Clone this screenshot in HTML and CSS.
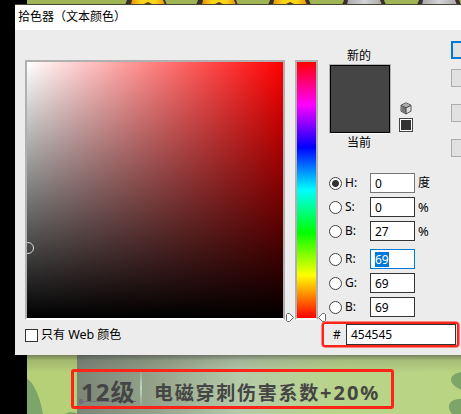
FILE: index.html
```html
<!DOCTYPE html>
<html lang="zh-CN">
<head>
<meta charset="utf-8">
<title>拾色器</title>
<link rel="stylesheet" href="styles.css">
</head>
<body>
<svg class="scene" width="461" height="414" viewBox="0 0 461 414">
  <defs>
    <linearGradient id="panel"><stop offset="0" stop-color="#7c8677"/><stop offset=".2" stop-color="#94a28a"/><stop offset=".42" stop-color="#b5caa8"/><stop offset=".68" stop-color="#b9d48a"/><stop offset="1" stop-color="#b9d582"/></linearGradient>
    <linearGradient id="shade" x2="0" y2="1"><stop offset="0" stop-color="#333" stop-opacity=".5"/><stop offset=".3" stop-color="#333" stop-opacity=".15"/><stop offset="1" stop-color="#333" stop-opacity="0"/></linearGradient>
    <linearGradient id="rule" x2="0" y2="1"><stop offset="0" stop-color="#bdd0b5" stop-opacity="0"/><stop offset=".5" stop-color="#bdd8c4"/><stop offset="1" stop-color="#bdd0b5" stop-opacity="0"/></linearGradient>
    <linearGradient id="gold"><stop offset="0" stop-color="#e8940c"/><stop offset=".3" stop-color="#f9d51a"/><stop offset=".7" stop-color="#f9d51a"/><stop offset="1" stop-color="#e8940c"/></linearGradient>
    <linearGradient id="silver"><stop offset="0" stop-color="#a9a9ab"/><stop offset=".5" stop-color="#d3d3d8"/><stop offset="1" stop-color="#a9a9ab"/></linearGradient>
  </defs>
  <path fill="#000" d="M0 0h461v414H0z"/>
  <path fill="#9fb455" d="M27 0h434v4H27z"/>
  <path fill="#3b3027" d="M127 0h38l2 5h-42zM198 0h38l2 5h-42zM270 0h39l2 5h-43zM344 0h40l2 5h-44zM419 0h40l2 5h-44z"/>
  <path fill="url(#gold)" d="M132 0h31l2 5h-34z"/>
  <path fill="url(#gold)" d="M203 0h31l2 5h-34z"/>
  <path fill="url(#gold)" d="M274 0h31l2 5h-34z"/>
  <path fill="url(#silver)" d="M348 0h32l2 5h-35z"/>
  <path fill="url(#silver)" d="M423 0h32l2 5h-35z"/>
  <path fill="#5b3c10" d="M144 4l4-2 4 2zM215 4l4-2 4 2zM286 4l4-2 4 2z"/>
  <path fill="#474532" d="M15 4h446v1H15z"/>
  <path fill="#b6d078" d="M27 355h50v59H27z"/>
  <path fill="url(#panel)" d="M77 355h384v59H77z"/>
  <path fill="#7da569" d="M27 379c8 4 14 22 16 35H27zM64 414l6-2 7 1v1zM461 372c-11 2-13 9-5 15l5 3zM461 399c-12 0-15 7-9 15h9z"/>
  <path fill="url(#shade)" d="M27 355h434v18H27z"/>
  <path fill="url(#rule)" d="M140 368h2v40h-2z"/>
  <path fill="#756d7c" d="M79 399h4v5h-4zM83 401h53v1H83z"/>
</svg>
<main class="dialog">
  <header class="title">拾色器（文本颜色）</header>
  <div class="body">
    <section class="picker">
      <div class="graphs">
        <div class="field"><i class="marker"></i></div>
        <div class="hue">
          <svg class="sliders" width="40" height="10" viewBox="0 0 40 10"><g fill="#fff" stroke="#666"><path d="M1.500.5h2l4 4-4 4h-2l-1-1v-6zM38.500.5h-2l-4 4 4 4h2l1-1v-6z"/></g></svg>
        </div>
      </div>
      <label class="web"><i class="check"></i><span>只有 <span class="latin">Web</span> 颜色</span></label>
    </section>
    <section class="values">
      <div class="caption">新的</div>
      <div class="compare">
        <div class="swatch"></div>
        <div class="tools">
          <svg width="12" height="13" viewBox="0 0 12 13"><path fill="#ddd" stroke="#555" d="M6 .8l5 2.400v6L6 12 1 9.200v-6z"/><path fill="#777" d="M1.500 4L6 6v5.500L1.500 9z"/><path fill="#aaa" d="M6 1.500l4.300 2L6 5.500l-4.300-2z"/><path fill="none" stroke="#444" d="M1 3.500l5 2.300 5-2.300M6 6v6"/></svg>
          <i class="safe"></i>
        </div>
      </div>
      <div class="caption current">当前</div>
      <div class="rows">
        <label class="row"><i class="radio on"></i><span class="name">H:</span><span class="input soft">0</span><span class="unit">度</span></label>
        <label class="row"><i class="radio"></i><span class="name">S:</span><span class="input">0</span><span class="unit percent">%</span></label>
        <label class="row"><i class="radio"></i><span class="name">B:</span><span class="input">27</span><span class="unit percent">%</span></label>
        <label class="row rgb"><i class="radio"></i><span class="name">R:</span><span class="input focus"><mark>69</mark></span></label>
        <label class="row"><i class="radio"></i><span class="name">G:</span><span class="input">69</span></label>
        <label class="row"><i class="radio"></i><span class="name">B:</span><span class="input">69</span></label>
      </div>
      <div class="hex"><span class="hash">#</span><span class="code">454545</span></div>
    </section>
    <aside class="buttons"><i class="btn primary"></i><i class="btn"></i><i class="btn far"></i><i class="btn far"></i></aside>
  </div>
</main>
<footer class="effect"><span class="level">12级</span><span class="text">电磁穿刺伤害系数<span class="amount">+20%</span></span></footer>
</body>
</html>
```

FILE: styles.css
```css
* { box-sizing: border-box; }
body {
  margin: 0;
  width: 461px;
  height: 414px;
  overflow: hidden;
  position: relative;
  background: #000;
  color: #000;
  font: 12px/16px "Noto Sans", "Noto Sans CJK SC", sans-serif;
  white-space: nowrap;
  display: flow-root;
}
i { display: block; flex: none; }
svg { display: block; }
.scene { position: absolute; inset: 0; z-index: -1; }
.dialog {
  margin: 5px 0 0 15px;
  height: 350px;
  background: #ececec;
  overflow: hidden;
}
.title { height: 25px; padding-left: 3px; background: #fff; line-height: 24px; }
.body { display: flex; height: 325px; }
.picker { width: 314px; padding: 30px 0 0 10px; flex: none; }
.graphs { display: flex; gap: 10px; }
.field, .hue {
  height: 260px;
  border: 2px solid #b0b0b0;
  border-bottom-color: #fff;
}
.field {
  width: 260px;
  position: relative;
  overflow: hidden;
  background: linear-gradient(to bottom, transparent, #000), linear-gradient(to right, #fff, #f00);
}
.marker {
  position: absolute;
  left: -5px;
  top: 180px;
  width: 12px;
  height: 12px;
  border: 1px solid #ddd;
  border-radius: 50%;
}
.hue {
  width: 23px;
  position: relative;
  background: linear-gradient(#f00, #f0f 16.67%, #00f 33.33%, #0ff 50%, #0f0 66.67%, #ff0 83.33%, #f00) padding-box;
}
.sliders { position: absolute; left: -11px; top: 251px; }
.web { display: flex; margin-top: 7px; gap: 3px; align-items: center; }
.latin { font-size: 12.500px; }
.check { width: 13px; height: 13px; background: #fff; border: 1px solid #333; }
.values { width: 122px; flex: none; padding-top: 18px; }
.caption { width: 60px; text-align: center; height: 16px; line-height: 16px; }
.compare { display: flex; align-items: flex-end; gap: 8px; }
.swatch { width: 62px; height: 70px; background: #454545; border: 1px solid #b5b5b5; border-bottom-color: #fff; outline: 1px solid #000; outline-offset: -2px; }
.tools { display: flex; flex-direction: column; align-items: center; gap: 3px; padding-bottom: 2px; }
.safe { width: 14px; height: 14px; background: #333; border: 1px solid #444; box-shadow: inset 0 0 0 1px #fff; }
.current { height: 17px; padding-top: 1px; }
.rows { margin-top: 22px; display: grid; gap: 4px; }
.row { display: flex; align-items: center; height: 20px; }
.rgb { margin-top: 4px; }
.radio { width: 13px; height: 13px; border: 1px solid #444; border-radius: 50%; background: #fff; }
.on { background: radial-gradient(circle, #333 0 3px, #fff 4px); }
.name { width: 28px; padding-left: 3px; }
.input { width: 45px; height: 20px; border: 1px solid #333; background: #fff; padding-left: 4px; line-height: 19px; }
.soft { border-color: #777; }
.focus { border-color: #0078d7; }
mark { display: inline-block; height: 15px; line-height: 15px; background: #0078d7; color: #fff; }
.unit { padding-left: 3px; }
.percent { font-size: 13px; }
.hex {
  display: flex;
  align-items: center;
  width: 137px;
  height: 25px;
  margin: 5px 0 0 -7px;
  border: 2px solid #fe2419;
  border-radius: 3px;
  box-shadow: 0 0 0 .5px #fe2419;
}
.hash { width: 22px; padding-left: 9px; }
.code { width: 110px; height: 21px; border: 1px solid #333; background: #fff; padding-left: 4px; line-height: 19px; }
.buttons { width: 10px; padding-top: 11px; display: flex; flex-direction: column; gap: 10px; overflow: hidden; }
.btn { width: 70px; height: 18px; border: 1px solid #adadad; background: #e1e1e1; }
.primary { border: 2px solid #0078d7; }
.far { margin-top: 7px; }
.effect {
  display: flex;
  align-items: center;
  width: 323px;
  height: 40px;
  margin: 14px 0 0 71px;
  border: 3px solid #fe2419;
  border-radius: 3px;
  padding-left: 7px;
  color: #454545;
  font-weight: 700;
}
.level { width: 73px; font-size: 24px; letter-spacing: 1px; padding-top: 6px; }
.text { font-size: 19px; letter-spacing: 1.75px; padding-top: 7px; }
.amount { font-size: 20px; letter-spacing: 2px; }
```
